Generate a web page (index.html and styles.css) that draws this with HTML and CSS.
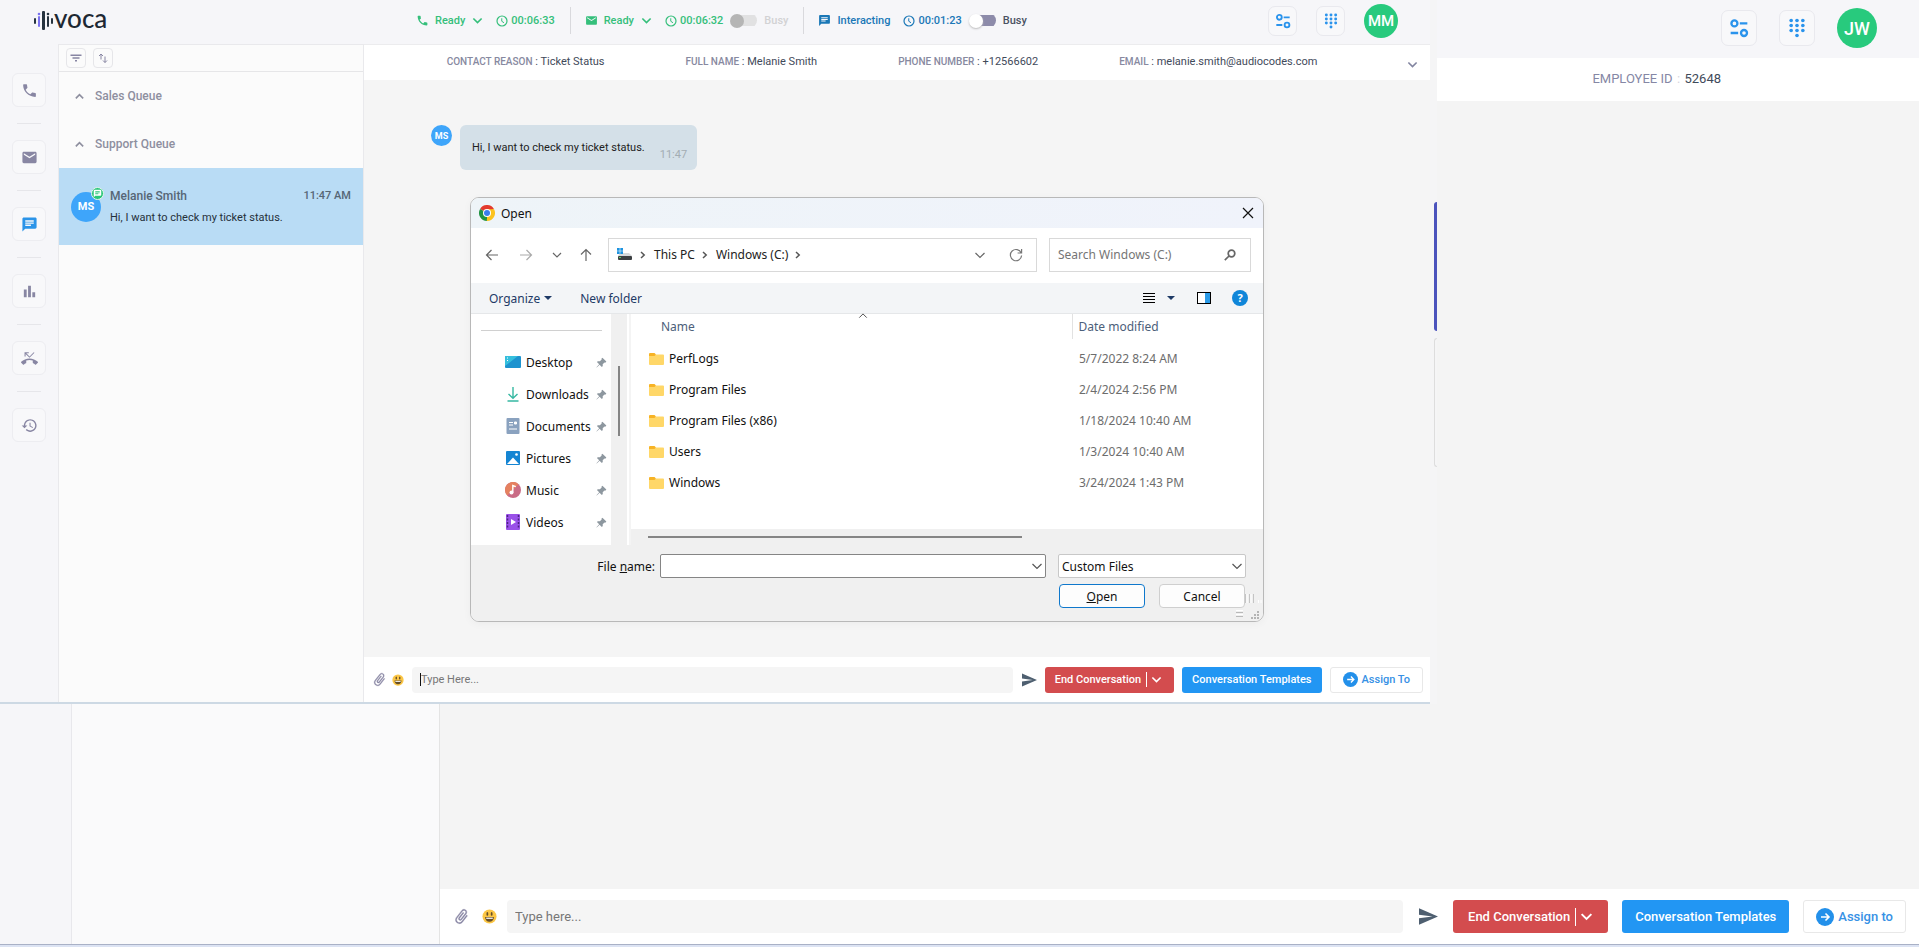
FILE: index.html
```html
<!DOCTYPE html>
<html lang="en">
<head>
<meta charset="UTF-8" />
<meta name="viewport" content="width=device-width, initial-scale=1" />
<title>Voca - Agent Workspace</title>
<link rel="stylesheet" href="styles.css">
</head>
<body>

<!-- icon sprite -->
<svg class="sprite" aria-hidden="true">
  <symbol id="i-phone" viewBox="0 0 24 24"><path d="M6.62 10.79c1.44 2.83 3.76 5.14 6.59 6.59l2.2-2.2c.27-.27.67-.36 1.02-.24 1.12.37 2.33.57 3.57.57.55 0 1 .45 1 1V20c0 .55-.45 1-1 1-9.39 0-17-7.61-17-17 0-.55.45-1 1-1h3.5c.55 0 1 .45 1 1 0 1.25.2 2.45.57 3.57.11.35.03.74-.25 1.02l-2.2 2.2z"/></symbol>
  <symbol id="i-mail" viewBox="0 0 24 24"><path d="M20 4H4c-1.1 0-1.99.9-1.99 2L2 18c0 1.1.9 2 2 2h16c1.1 0 2-.9 2-2V6c0-1.1-.9-2-2-2zm0 4l-8 5-8-5V6l8 5 8-5v2z"/></symbol>
  <symbol id="i-chat" viewBox="0 0 24 24"><path d="M20 2H4c-1.1 0-1.99.9-1.99 2L2 22l4-4h14c1.1 0 2-.9 2-2V4c0-1.1-.9-2-2-2zM6 9h12v2H6V9zm8 5H6v-2h8v2zm4-6H6V6h12v2z"/></symbol>
  <symbol id="i-bars" viewBox="0 0 24 24"><path d="M4 9h4v11H4zM16 13h4v7h-4zM10 4h4v16h-4z"/></symbol>
  <symbol id="i-missed" viewBox="0 0 24 24"><path d="M23.71 16.67C20.66 13.78 16.54 12 12 12 7.46 12 3.34 13.78.29 16.67c-.18.18-.29.43-.29.71 0 .28.11.53.29.71l2.48 2.48c.18.18.43.29.71.29.27 0 .52-.11.7-.28.79-.74 1.69-1.36 2.66-1.85.33-.16.56-.5.56-.9v-3.1c1.45-.48 3-.73 4.6-.73 1.6 0 3.15.25 4.6.72v3.1c0 .39.23.74.56.9.98.49 1.87 1.12 2.67 1.85.18.18.43.28.7.28.28 0 .53-.11.71-.29l2.48-2.48c.18-.18.29-.43.29-.71 0-.28-.12-.52-.3-.7zM6.5 5.5L12 11l7-7-1-1-6 6-4.5-4.5H11V3H5v6h1.5V5.5z"/></symbol>
  <symbol id="i-history" viewBox="0 0 24 24"><path d="M13 3c-4.97 0-9 4.03-9 9H1l3.89 3.89.07.14L9 12H6c0-3.87 3.13-7 7-7s7 3.13 7 7-3.13 7-7 7c-1.93 0-3.68-.79-4.94-2.06l-1.42 1.42C8.27 19.99 10.51 21 13 21c4.97 0 9-4.03 9-9s-4.03-9-9-9zm-1 5v5l4.28 2.54.72-1.21-3.5-2.08V8H12z"/></symbol>
  <symbol id="i-clock" viewBox="0 0 24 24"><circle cx="12" cy="12" r="10" fill="none" stroke="currentColor" stroke-width="2.4"/><path d="M11.5 6.5v6l4.5 3" fill="none" stroke="currentColor" stroke-width="2"/></symbol>
  <symbol id="i-down" viewBox="0 0 12 12"><path d="M1.5 3.8L6 8.2l4.5-4.400" fill="none" stroke="currentColor" stroke-width="1.8"/></symbol>
  <symbol id="i-thin-down" viewBox="0 0 12 12"><path d="M1.5 4L6 8.5 10.5 4" fill="none" stroke="currentColor" stroke-width="1.2"/></symbol>
  <symbol id="i-up" viewBox="0 0 12 12"><path d="M2 8.5L6 4.500l4 4" fill="none" stroke="currentColor" stroke-width="1.8"/></symbol>
  <symbol id="i-crumb" viewBox="0 0 8 8"><path d="M2 1l3.200 3L2 7" fill="none" stroke="currentColor" stroke-width="1.5"/></symbol>
  <symbol id="i-filter" viewBox="0 0 24 24"><path d="M10 19h4v-3h-4v3zM1 5v3h22V5H1zm4 8.500h14v-3H5v3z"/></symbol>
  <symbol id="i-sort" viewBox="0 0 24 24"><path d="M8 15V4M4 8l4-4 4 4M16 9v12M12 17l4 4 4-4" fill="none" stroke="currentColor" stroke-width="2"/></symbol>
  <symbol id="i-settings" viewBox="0 0 24 24"><g fill="none" stroke="currentColor" stroke-width="2.8"><circle cx="6.500" cy="6.500" r="3.600"/><circle cx="18" cy="18" r="3.600"/><path d="M13 6.500h9M2 18h9"/></g></symbol>
  <symbol id="i-dialpad" viewBox="0 0 24 24"><circle cx="5" cy="3" r="2.200"/><circle cx="12" cy="3" r="2.200"/><circle cx="19" cy="3" r="2.200"/><circle cx="5" cy="9" r="2.200"/><circle cx="12" cy="9" r="2.200"/><circle cx="19" cy="9" r="2.200"/><circle cx="5" cy="15" r="2.200"/><circle cx="12" cy="15" r="2.200"/><circle cx="19" cy="15" r="2.200"/><circle cx="12" cy="21" r="2.200"/></symbol>
  <symbol id="i-send" viewBox="2 3 21 18"><path d="M2.010 21L23 12 2.010 3 2 10l15 2-15 2z"/></symbol>
  <symbol id="i-clip" viewBox="0 0 24 24"><path transform="rotate(38 12 12)" d="M16.500 6v11.500c0 2.210-1.790 4-4 4s-4-1.790-4-4V5c0-1.380 1.120-2.500 2.500-2.500s2.500 1.120 2.500 2.500v10.500c0 .55-.45 1-1 1s-1-.45-1-1V6H10v9.500c0 1.380 1.120 2.500 2.500 2.500s2.500-1.120 2.500-2.500V5c0-2.210-1.790-4-4-4S7 2.790 7 5v12.500c0 3.040 2.460 5.500 5.500 5.500s5.500-2.460 5.500-5.500V6h-1.500z" stroke="currentColor" stroke-width=".5"/></symbol>
  <symbol id="i-smile" viewBox="0 0 16 16"><circle cx="8" cy="8" r="7.500" fill="#fbc645"/><ellipse cx="5.700" cy="5.300" rx="1" ry="2" fill="#664e27"/><ellipse cx="10.300" cy="5.300" rx="1" ry="2" fill="#664e27"/><path d="M3.300 8.500h9.400c0 3.200-2 5-4.700 5s-4.700-1.800-4.700-5z" fill="#664e27"/><path d="M4.500 9.200h7v1.300h-7z" fill="#fff"/></symbol>
  <symbol id="i-assign" viewBox="0 0 18 18"><circle cx="9" cy="9" r="9"/><path d="M5 9h8M9.500 5.500L13 9l-3.500 3.500" fill="none" stroke="#fff" stroke-width="1.6"/></symbol>
  <symbol id="i-pin" viewBox="0 0 12 12"><path d="M7 .8L11.300 5l-1.200 1.200-.8-.3-2 2 .1 2-1 1L3.900 8.500.8 11.400l-.3-.3 3-3.200L1 5.500l1-1 2.200.1 2-2L5.900 2z" fill="#8d979f"/></symbol>
  <symbol id="i-folder" viewBox="0 0 15 13"><path d="M0 2Q0 1 1 1h4.500L7 2.500V5H0z" fill="#f7b325"/><path d="M0 4h5.500L7 2.500h7q1 0 1 1V12q0 1-1 1H1q-1 0-1-1z" fill="#ffd768"/></symbol>
</svg>

<div class="app">
  <header class="app-header">
    <button class="icon-btn" aria-label="Settings"><svg class="icon"><use href="#i-settings"/></svg></button>
    <button class="icon-btn" aria-label="Dial pad"><svg class="icon"><use href="#i-dialpad"/></svg></button>
    <span class="user">JW</span>
  </header>
  <div class="app-body">
    <div class="app-rail"></div>
    <div class="app-list"></div>
    <main class="app-main">
      <div class="app-details"><b>EMPLOYEE ID</b><i>:</i><span>52648</span></div>
      <div class="canvas"></div>
      <form class="composer composer-lg">
        <button class="plain clip" type="button" aria-label="Attach file"><svg><use href="#i-clip"/></svg></button>
        <button class="plain smile" type="button" aria-label="Emoji"><svg><use href="#i-smile"/></svg></button>
        <div class="field"><input type="text" placeholder="Type here..." aria-label="Message"></div>
        <button class="plain send" type="button" aria-label="Send"><svg><use href="#i-send"/></svg></button>
        <button class="btn danger" type="button">End Conversation<span class="split"></span><svg><use href="#i-down"/></svg></button>
        <button class="btn primary" type="button">Conversation Templates</button>
        <button class="btn outline" type="button"><svg><use href="#i-assign"/></svg>Assign to</button>
      </form>
    </main>
  </div>
</div>

<!-- agent window -->
<div class="stage">
  <div class="peek peek-active"></div>
  <div class="peek"></div>
  <div class="agent">
    <header class="agent-header">
      <div class="logo">
        <svg viewBox="0 0 20 20" aria-hidden="true">
          <g fill="#26333f"><rect y="7" width="2" height="6" rx="1"/><rect x="8" width="3" height="19" rx="1"/><circle cx="14" cy="3" r="1.300"/><rect x="13" y="5" width="2" height="11" rx="1"/><rect x="17" y="7" width="2" height="6" rx="1"/></g>
          <g fill="#7a72f0"><circle cx="5" cy="3" r="1.300"/><rect x="4" y="5" width="2" height="11" rx="1"/></g>
        </svg>
        <span>voca</span>
      </div>
      <div class="channels">
        <div class="channel ready">
          <svg class="kind"><use href="#i-phone"/></svg><span class="state">Ready</span><svg class="arrow"><use href="#i-down"/></svg>
          <svg class="clock"><use href="#i-clock"/></svg><span>00:06:33</span>
        </div>
        <div class="channel ready">
          <svg class="kind"><use href="#i-mail"/></svg><span class="state">Ready</span><svg class="arrow"><use href="#i-down"/></svg>
          <svg class="clock"><use href="#i-clock"/></svg><span>00:06:32</span>
          <label class="busy off"><input type="checkbox" disabled>Busy</label>
        </div>
        <div class="channel interacting">
          <svg class="kind"><use href="#i-chat"/></svg><span class="state">Interacting</span>
          <svg class="clock"><use href="#i-clock"/></svg><span>00:01:23</span>
          <label class="busy"><input type="checkbox">Busy</label>
        </div>
      </div>
      <div class="tools">
        <button class="icon-btn" aria-label="Settings"><svg class="icon"><use href="#i-settings"/></svg></button>
        <button class="icon-btn" aria-label="Dial pad"><svg class="icon"><use href="#i-dialpad"/></svg></button>
        <span class="user">MM</span>
      </div>
    </header>

    <div class="agent-body">
      <nav class="rail">
        <button aria-label="Calls"><svg><use href="#i-phone"/></svg></button>
        <button aria-label="Emails"><svg><use href="#i-mail"/></svg></button>
        <button class="active" aria-label="Chats"><svg><use href="#i-chat"/></svg></button>
        <button aria-label="Statistics"><svg><use href="#i-bars"/></svg></button>
        <button aria-label="Missed calls"><svg><use href="#i-missed"/></svg></button>
        <button aria-label="History"><svg><use href="#i-history"/></svg></button>
      </nav>

      <aside class="queues">
        <div class="queue-tools">
          <button aria-label="Filter"><svg><use href="#i-filter"/></svg></button>
          <button aria-label="Sort"><svg><use href="#i-sort"/></svg></button>
        </div>
        <button class="queue"><svg><use href="#i-up"/></svg>Sales Queue</button>
        <button class="queue"><svg><use href="#i-up"/></svg>Support Queue</button>
        <article class="chat-item">
          <span class="face">MS<span class="badge"><svg><use href="#i-chat"/></svg></span></span>
          <div class="chat-text">
            <div class="chat-top"><b>Melanie Smith</b><time>11:47 AM</time></div>
            <p>Hi, I want to check my ticket status.</p>
          </div>
        </article>
      </aside>

      <main class="chat">
        <div class="details">
          <div class="detail"><b>CONTACT REASON</b> : Ticket Status</div>
          <div class="detail"><b>FULL NAME</b> : Melanie Smith</div>
          <div class="detail"><b>PHONE NUMBER</b> : +12566602</div>
          <div class="detail"><b>EMAIL</b> : melanie.smith@audiocodes.com</div>
          <button class="plain expand" aria-label="More details"><svg><use href="#i-down"/></svg></button>
        </div>
        <div class="canvas">
          <div class="message">
            <span class="face">MS</span>
            <div class="bubble"><p>Hi, I want to check my ticket status.</p><time>11:47</time></div>
          </div>
        </div>
        <form class="composer">
          <button class="plain clip" type="button" aria-label="Attach file"><svg><use href="#i-clip"/></svg></button>
          <button class="plain smile" type="button" aria-label="Emoji"><svg><use href="#i-smile"/></svg></button>
          <div class="field"><span class="caret"></span><input type="text" placeholder="Type Here..." aria-label="Message"></div>
          <button class="plain send" type="button" aria-label="Send"><svg><use href="#i-send"/></svg></button>
          <button class="btn danger" type="button">End Conversation<span class="split"></span><svg><use href="#i-down"/></svg></button>
          <button class="btn primary" type="button">Conversation Templates</button>
          <button class="btn outline" type="button"><svg><use href="#i-assign"/></svg>Assign To</button>
        </form>
      </main>
    </div>
  </div>
</div>

<!-- file picker -->
<section class="dialog" role="dialog" aria-label="Open">
  <div class="titlebar">
    <svg class="chrome" viewBox="0 0 48 48" aria-hidden="true">
      <path d="M24 24L3.200 12A24 24 0 0 1 44.800 12z" fill="#e33b2e"/>
      <path d="M24 24L44.800 12A24 24 0 0 1 24 48z" fill="#fcc31e"/>
      <path d="M24 24V48A24 24 0 0 1 3.200 12z" fill="#229342"/>
      <path d="M24 13h20.800L34 30 22 48l5-14z" fill="#fcc31e"/>
      <circle cx="24" cy="24" r="12" fill="#fff"/><circle cx="24" cy="24" r="9" fill="#3b7ded"/>
    </svg>
    <span>Open</span>
    <button class="plain" aria-label="Close"><svg viewBox="0 0 12 12"><path d="M1 1l10 10M11 1L1 11" stroke="#111" stroke-width="1.2"/></svg></button>
  </div>

  <div class="navbar">
    <div class="nav-btns">
      <button class="plain" aria-label="Back"><svg viewBox="0 0 14 14"><path d="M13 7H1.500M6.500 2L1.500 7l5 5"/></svg></button>
      <button class="plain dim" aria-label="Forward"><svg viewBox="0 0 14 14"><path d="M1 7h11.500M7.500 2l5 5-5 5"/></svg></button>
      <button class="plain recent" aria-label="Recent"><svg viewBox="0 0 12 12"><path d="M2 4l4 4 4-4"/></svg></button>
      <button class="plain" aria-label="Up"><svg viewBox="0 0 14 14"><path d="M7 13V1.500M2 6.500l5-5 5 5"/></svg></button>
    </div>
    <nav class="address">
      <svg class="drive" viewBox="0 0 16 14" aria-hidden="true"><path d="M3 5h9l3 3H1z" fill="#d5d8da"/><rect x="1" y="8" width="14" height="4" rx="1" fill="#3c3f42"/><path d="M0 0h2.700v2.700H0zM3.300 0H6v2.700H3.300zM0 3.300h2.700V6H0zM3.300 3.300H6V6H3.300z" fill="#1c93e0"/><rect x="2" y="9" width="2" height="1" fill="#5fd35f"/></svg>
      <svg class="crumb"><use href="#i-crumb"/></svg><a href="#">This PC</a>
      <svg class="crumb"><use href="#i-crumb"/></svg><a href="#">Windows (C:)</a>
      <svg class="crumb"><use href="#i-crumb"/></svg>
      <button class="plain history" aria-label="Previous locations"><svg class="s12"><use href="#i-thin-down"/></svg></button>
      <button class="plain" aria-label="Refresh"><svg class="s14" viewBox="0 0 14 14"><path d="M12.200 5A5.600 5.600 0 1 0 12.600 7.500M12.600 1v4H8.600" fill="none" stroke="#777" stroke-width="1.2"/></svg></button>
    </nav>
    <div class="search">
      <input type="text" placeholder="Search Windows (C:)" aria-label="Search Windows (C:)">
      <svg class="s12" viewBox="0 0 12 12"><circle cx="7.500" cy="4.500" r="3.300" fill="none" stroke="#666" stroke-width="1.7"/><path d="M5 7L.8 11.200" stroke="#666" stroke-width="1.7"/></svg>
    </div>
  </div>

  <div class="commands">
    <button class="plain">Organize<span class="tri"></span></button>
    <button class="plain">New folder</button>
    <div class="views">
      <button class="plain" aria-label="Change view"><svg class="s12" viewBox="0 0 12 12"><path d="M0 1.500h12M0 4.500h12M0 7.500h12M0 10.500h12" stroke="#000"/></svg></button>
      <button class="plain more" aria-label="More views"><span class="tri"></span></button>
      <button class="plain preview" aria-label="Preview pane"><svg viewBox="0 0 14 12"><rect x=".5" y=".5" width="13" height="11" fill="#fff" stroke="#000"/><path d="M8 1h5v10H8z" fill="#2b9be8"/></svg></button>
      <button class="help" aria-label="Help">?</button>
    </div>
  </div>

  <div class="browser">
    <div class="places">
      <ul>
        <li><svg class="s16" viewBox="0 0 16 16"><rect y="2" width="16" height="12" rx="1" fill="#1d93cf"/><path d="M0 12V3q0-1 1-1h12z" fill="#35bfdd"/><path d="M2 4h1M2 6.500h1" stroke="#fff"/></svg><span>Desktop</span><svg class="pin"><use href="#i-pin"/></svg></li>
        <li><svg class="s16" viewBox="0 0 16 16"><path d="M8 1v11M3.500 8L8 12.200 12.500 8M2.500 15h11" fill="none" stroke="#36b8a2" stroke-width="1.4"/></svg><span>Downloads</span><svg class="pin"><use href="#i-pin"/></svg></li>
        <li><svg class="s16" viewBox="0 0 16 16"><rect x="1.500" width="13" height="16" rx="1" fill="#8aa2bf"/><path d="M4 4.500h4M4 7h4M4 11h8M9.500 4h2v2h-2z" stroke="#fff" fill="#fff"/></svg><span>Documents</span><svg class="pin"><use href="#i-pin"/></svg></li>
        <li><svg class="s16" viewBox="0 0 16 16"><rect x="1" y="1" width="14" height="14" rx="1" fill="#1585d3"/><path d="M2 14l6-6.500L14 14z" fill="#fff"/><circle cx="11.500" cy="4.500" r="1.300" fill="#fff"/></svg><span>Pictures</span><svg class="pin"><use href="#i-pin"/></svg></li>
        <li><svg class="s16" viewBox="0 0 16 16"><circle cx="8" cy="8" r="8" fill="#ca6c86"/><path d="M0 8a8 8 0 0 1 13.500-5.800L2.300 13.600A8 8 0 0 1 0 8z" fill="#e5815f"/><circle cx="6.500" cy="10.500" r="2" fill="#fff"/><path d="M7.800 10.500V3.500l3 1.200" fill="none" stroke="#fff" stroke-width="1.4"/></svg><span>Music</span><svg class="pin"><use href="#i-pin"/></svg></li>
        <li><svg class="s16" viewBox="0 0 16 16"><rect x="1" width="14" height="16" rx="1" fill="#9a51e8"/><path d="M2.500 1v14M13.500 1v14" stroke="#4d2382" stroke-width="1.5" stroke-dasharray="2 1.5"/><path d="M6 5l5 3-5 3z" fill="#fff"/></svg><span>Videos</span><svg class="pin"><use href="#i-pin"/></svg></li>
      </ul>
      <div class="vscroll"></div>
    </div>
    <div class="files">
      <svg class="sorted"><use href="#i-thin-down"/></svg>
      <table>
        <thead><tr><th>Name</th><th class="date">Date modified</th></tr></thead>
        <tbody>
          <tr><td><svg><use href="#i-folder"/></svg>PerfLogs</td><td>5/7/2022 8:24 AM</td></tr>
          <tr><td><svg><use href="#i-folder"/></svg>Program Files</td><td>2/4/2024 2:56 PM</td></tr>
          <tr><td><svg><use href="#i-folder"/></svg>Program Files (x86)</td><td>1/18/2024 10:40 AM</td></tr>
          <tr><td><svg><use href="#i-folder"/></svg>Users</td><td>1/3/2024 10:40 AM</td></tr>
          <tr><td><svg><use href="#i-folder"/></svg>Windows</td><td>3/24/2024 1:43 PM</td></tr>
        </tbody>
      </table>
      <div class="hscroll"></div>
    </div>
  </div>

  <form class="footer">
    <div class="footer-row">
      <label for="filename">File <u>n</u>ame:</label>
      <div class="combo"><input id="filename" type="text"><svg class="s12"><use href="#i-thin-down"/></svg></div>
      <div class="filetype"><select aria-label="File type"><option>Custom Files</option></select><svg class="s12"><use href="#i-thin-down"/></svg></div>
    </div>
    <div class="footer-row actions">
      <button class="default" type="button"><span><u>O</u>pen</span></button>
      <button type="button">Cancel</button>
    </div>
    <svg class="grips" viewBox="0 0 28 26" aria-hidden="true">
      <path d="M10.500 0v9M14.500 0v9M18.500 0v9" stroke="#c4c4c4"/><path d="M12 0v9M16 0v9M23.500 6v3M26 6v3" stroke="#fff"/>
      <path d="M1 18.500h7M1 22.500h7" stroke="#b9b9b9"/><path d="M1 16.500h7M1 20.500h7" stroke="#fff"/>
      <path d="M22 17h2v2h-2zM19 20h2v2h-2zM22 20h2v2h-2zM16 23h2v2h-2zM19 23h2v2h-2zM22 23h2v2h-2z" fill="#b4b4b4"/>
    </svg>
  </form>
</section>

</body>
</html>
```

FILE: styles.css
```css
* {
  box-sizing: border-box;
}
body {
  margin: 0;
  background: #f4f4f4;
  color: #3f4a5a;
  font-family: Roboto, sans-serif;
  overflow: hidden;
}
button, input, select {
  font: inherit;
  color: inherit;
  margin: 0;
  padding: 0;
}
svg {
  display: block;
  flex: none;
  fill: currentColor;
}
p {
  margin: 0;
}
b {
  font-weight: 500;
}
.sprite {
  position: absolute;
  width: 0;
  height: 0;
}
.plain {
  display: flex;
  align-items: center;
  border: none;
  background: none;
}
.s12 { width: 12px; height: 12px; }
.s14 { width: 14px; height: 14px; }
.s16 { width: 16px; height: 16px; }

/* full size workspace */
.app {
  display: flex;
  flex-direction: column;
  height: 100vh;
  border-bottom: 2px solid #dce3f3;
}
.app-header {
  display: flex;
  justify-content: flex-end;
  align-items: center;
  gap: 22px;
  height: 58px;
  padding: 0 42px 2px 0;
  background: #f6f6f9;
}
.icon-btn {
  display: grid;
  place-items: center;
  width: 36px;
  height: 36px;
  border: 1px solid #e9e9ee;
  border-radius: 7px;
  background: #f8f8fa;
  color: #2a93ec;
}
.icon {
  width: 20px;
  height: 20px;
}
.user {
  display: grid;
  place-items: center;
  width: 40px;
  height: 40px;
  border-radius: 50%;
  background: #28ca7d;
  color: #fff;
  font-size: 18px;
  font-weight: 500;
}
.app-body {
  display: flex;
  flex: 1;
  border-bottom: 1px solid #a9b1c6;
}
.app-rail {
  width: 72px;
  background: #f6f6f9;
  border-right: 1px solid #e8e8ec;
}
.app-list {
  width: 368px;
  background: #fafafb;
  border-right: 1px solid #e4e4e4;
}
.app-main {
  display: flex;
  flex-direction: column;
  flex: 1;
}
.app-details {
  display: flex;
  justify-content: flex-end;
  align-items: center;
  height: 43px;
  padding: 0 198px 2px 0;
  background: #fff;
  font-size: 13px;
}
.app-details b {
  font-weight: 400;
  color: #8587a5;
}
.app-details i {
  width: 12px;
  text-align: center;
  font-style: normal;
  color: #d5d5dd;
}
.canvas {
  flex: 1;
}

/* message composer */
.composer {
  display: flex;
  align-items: center;
  height: 45px;
  padding: 0 7px 0 8px;
  background: #fff;
  font-size: 11px;
}
.clip {
  color: #8886a3;
}
.clip svg {
  width: 15px;
  height: 15px;
}
.smile {
  margin: 0 8px 0 5px;
}
.smile svg {
  width: 12px;
  height: 12px;
}
.field {
  display: flex;
  align-items: center;
  flex: 1;
  height: 26px;
  padding-left: 8px;
  border-radius: 4px;
  background: #f5f5f5;
}
.field input {
  flex: 1;
  border: none;
  background: none;
  outline: none;
}
.field input::placeholder {
  color: #777;
}
.caret {
  width: 1px;
  height: 13px;
  background: #111;
}
.send {
  margin: 0 8px 0 9px;
  color: #4e5f70;
}
.send svg {
  width: 15px;
  height: 14px;
}
.btn {
  display: flex;
  align-items: center;
  justify-content: center;
  height: 26px;
  padding: 0 10px;
  border: none;
  border-radius: 3px;
  color: #fff;
  font-weight: 500;
  white-space: nowrap;
}
.btn + .btn {
  margin-left: 8px;
}
.danger {
  background: #d34c4e;
  padding: 0 12px 0 10px;
}
.danger svg {
  width: 11px;
  height: 11px;
}
.split {
  width: 1px;
  height: 15px;
  margin: 0 4px 0 5px;
  background: #fff;
}
.primary {
  background: #2296f3;
}
.outline {
  gap: 4px;
  padding: 0 12px;
  border: 1px solid #e8e8e8;
  background: #fff;
  color: #3791e5;
}
.outline svg {
  width: 15px;
  height: 15px;
  color: #2390ea;
}

.composer-lg {
  height: 55px;
  padding: 0 13px;
  font-size: 13px;
}
.composer-lg .clip svg {
  width: 17px;
  height: 17px;
}
.composer-lg .smile {
  margin: 0 10px 0 12px;
}
.composer-lg .smile svg {
  width: 15px;
  height: 15px;
}
.composer-lg .field,
.composer-lg .btn {
  height: 33px;
}
.composer-lg .send {
  margin: 0 15px 0 16px;
}
.composer-lg .send svg {
  width: 19px;
  height: 17px;
}
.composer-lg .btn {
  padding: 0 13px;
}
.composer-lg .btn.danger {
  padding: 0 15px;
}
.composer-lg .btn.outline {
  padding: 0 12px;
}
.composer-lg .btn + .btn {
  margin-left: 14px;
}
.composer-lg .danger svg {
  width: 13px;
  height: 13px;
}
.composer-lg .outline svg {
  width: 18px;
  height: 18px;
}
.composer-lg .split {
  height: 18px;
}

/* agent window on top */
.stage {
  position: absolute;
  top: 0;
  left: 0;
  width: calc(100% - 482px);
  height: calc(100vh - 243px);
  padding-right: 7px;
  background: #f5f5f6;
}
.peek {
  position: absolute;
  right: 0;
  top: 338px;
  width: 3px;
  height: 129px;
  border: 1px solid #ddd;
  border-right: none;
  border-radius: 4px 0 0 4px;
}
.peek-active {
  top: 202px;
  border: none;
  background: #4b53bc;
}
.agent {
  display: flex;
  flex-direction: column;
  height: 100%;
  background: #f6f6f9;
  border-bottom: 2px solid #cdd9e4;
}
.agent-header {
  display: flex;
  align-items: center;
  height: 44px;
  padding: 0 32px 3px 34px;
}
.logo {
  display: flex;
  align-items: center;
  width: 368px;
}
.logo svg {
  width: 20px;
  height: 20px;
}
.logo span {
  font-family: Lato, sans-serif;
  font-size: 26px;
  font-weight: 500;
  line-height: 30px;
  height: 36px;
  color: #1d2833;
}
.channels {
  display: flex;
  flex: 1;
  font-size: 11px;
  font-weight: 500;
}
.channel {
  display: flex;
  align-items: center;
  height: 27px;
  padding: 0 15px 0 14px;
}
.channel + .channel {
  border-left: 1px solid #d9d9dd;
}
.ready { color: #35bf7b; }
.interacting { color: #1b78b7; }
.kind {
  width: 13px;
  height: 13px;
}
.state {
  margin-left: 6px;
}
.arrow {
  width: 11px;
  height: 11px;
  margin-left: 7px;
}
.clock {
  width: 12px;
  height: 12px;
  margin: 0 3px 0 13px;
}
.busy {
  display: flex;
  align-items: center;
  gap: 7px;
  margin-left: 7px;
  color: #4a5263;
}
.busy.off {
  color: #d2d2d4;
}
.busy input {
  appearance: none;
  display: flex;
  align-items: center;
  width: 27px;
  height: 15px;
  border-radius: 8px;
  background: linear-gradient(#8d8baa, #8d8baa) right / 22px 11px no-repeat;
}
.busy input::before {
  content: "";
  width: 14px;
  height: 14px;
  border-radius: 50%;
  background: #fff;
  box-shadow: 0 1px 2px #bbb;
}
.busy.off input {
  background-image: linear-gradient(#e1e1e2, #e1e1e2);
}
.busy.off input::before {
  background: #b5b5b5;
  box-shadow: none;
}
.tools {
  display: flex;
  align-items: center;
  gap: 19px;
}
.agent .icon-btn {
  width: 29px;
  height: 30px;
}
.agent .icon {
  width: 16px;
  height: 16px;
}
.agent .user {
  width: 34px;
  height: 34px;
  font-size: 15px;
}
.agent-body {
  display: flex;
  flex: 1;
  min-height: 0;
}

/* icon rail */
.rail {
  display: flex;
  flex-direction: column;
  align-items: center;
  gap: 33px;
  width: 58px;
  padding-top: 29px;
}
.rail button {
  position: relative;
  display: grid;
  place-items: center;
  width: 34px;
  height: 34px;
  border: 1px solid #ededf1;
  border-radius: 6px;
  background: #f8f8fa;
  color: #8886a3;
}
.rail button + button::before {
  content: "";
  position: absolute;
  top: -18px;
  left: 4px;
  width: 24px;
  height: 1px;
  background: #e6e6ea;
}
.rail svg {
  width: 17px;
  height: 17px;
}
.rail .active {
  color: #2b94e8;
}

/* queue list */
.queues {
  width: 306px;
  border: 1px solid #e9e9ec;
  border-bottom: none;
  background: #fbfbfb;
}
.queue-tools {
  display: flex;
  align-items: center;
  gap: 7px;
  height: 27px;
  padding-left: 7px;
  border-bottom: 1px solid #e6e6e8;
}
.queue-tools button {
  display: grid;
  place-items: center;
  width: 20px;
  height: 20px;
  border: 1px solid #e6e6e9;
  border-radius: 4px;
  background: #fbfbfb;
  color: #8886a3;
}
.queue-tools svg {
  width: 12px;
  height: 12px;
}
.queue {
  display: flex;
  align-items: center;
  gap: 10px;
  width: 100%;
  height: 48px;
  padding-left: 15px;
  border: none;
  background: none;
  color: #8e8f9f;
  font-size: 12px;
  font-weight: 500;
}
.queue svg {
  width: 11px;
  height: 16px;
}
.chat-item {
  display: flex;
  align-items: center;
  gap: 9px;
  height: 77px;
  padding: 0 12px;
  background: #b9dcf5;
}
.face {
  position: relative;
  display: grid;
  place-items: center;
  width: 30px;
  height: 30px;
  border-radius: 50%;
  background: #3ea5fa;
  color: #fff;
  font-size: 11px;
  font-weight: 700;
}
.badge {
  position: absolute;
  top: -5px;
  right: -3px;
  display: grid;
  place-items: center;
  width: 13px;
  height: 13px;
  border: 1px solid #e5f5ee;
  border-radius: 50%;
  background: #28c678;
}
.badge svg {
  width: 9px;
  height: 9px;
}
.chat-text {
  flex: 1;
  font-size: 11px;
  line-height: 22px;
  color: #25303a;
}
.chat-top {
  display: flex;
  justify-content: space-between;
  color: #566675;
}
.chat-top b {
  font-size: 12px;
}
.chat-top time {
  font-weight: 500;
}

/* conversation */
.chat {
  display: flex;
  flex-direction: column;
  flex: 1;
  background: #f5f5f5;
}
.details {
  position: relative;
  display: flex;
  align-items: center;
  justify-content: center;
  gap: 81px;
  height: 36px;
  padding: 0 30px 2px 0;
  border-top: 1px solid #ececee;
  background: #fff;
  font-size: 11px;
  white-space: pre;
}
.detail b {
  font-size: 10px;
  color: #8789a0;
}
.expand {
  position: absolute;
  right: 12px;
  top: 14px;
  color: #8285a0;
}
.expand svg {
  width: 11px;
  height: 11px;
}
.message {
  display: flex;
  gap: 8px;
  padding: 45px 67px;
}
.message .face {
  width: 21px;
  height: 21px;
  font-size: 9px;
}
.bubble {
  display: flex;
  gap: 15px;
  height: 45px;
  padding: 16px 10px 0 12px;
  border-radius: 6px;
  background: #d4e0e8;
  color: #222;
  font-size: 11px;
}
.bubble time {
  padding-top: 7px;
  color: #a3adb3;
}

/* file picker */
.dialog {
  position: absolute;
  top: 197px;
  left: 470px;
  width: 794px;
  border: 1px solid #b8b8b8;
  border-radius: 9px;
  background: #fff;
  color: #111;
  font-family: "Noto Sans", sans-serif;
  font-size: 12px;
  overflow: hidden;
  box-shadow: 0 2px 8px #0000000a;
}
.titlebar {
  display: flex;
  align-items: center;
  height: 30px;
  padding: 0 9px 0 8px;
  background: linear-gradient(to right, #eef4f8, #f0f3fb);
}
.titlebar span {
  flex: 1;
  margin-left: 6px;
}
.chrome {
  width: 16px;
  height: 16px;
}
.titlebar button svg {
  width: 12px;
  height: 12px;
}
.navbar {
  display: flex;
  align-items: center;
  height: 55px;
  padding: 0 12px 2px 14px;
}
.nav-btns {
  display: flex;
  width: 123px;
  gap: 20px;
}
.nav-btns svg {
  width: 14px;
  height: 14px;
  fill: none;
  stroke: #666;
  stroke-width: 1.2;
}
.nav-btns .dim svg {
  stroke: #aaa;
}
.nav-btns .recent {
  margin: 0 -4px 0 -2px;
}
.nav-btns .recent svg {
  width: 12px;
}
.address {
  display: flex;
  align-items: center;
  flex: 1;
  height: 34px;
  padding: 0 13px 0 8px;
  border: 1px solid #d9d9d9;
}
.address a {
  color: #222;
  text-decoration: none;
}
.drive {
  width: 16px;
  height: 14px;
}
.crumb {
  width: 8px;
  height: 8px;
  margin: 0 7px 0 6px;
  color: #555;
}
.address .history {
  margin: 0 23px 0 auto;
  color: #666;
}
.search {
  display: flex;
  align-items: center;
  width: 202px;
  height: 34px;
  margin-left: 12px;
  padding: 0 14px 0 8px;
  border: 1px solid #d9d9d9;
}
.search input {
  flex: 1;
  min-width: 0;
  border: none;
  outline: none;
}
.search input::placeholder {
  color: #757575;
}
.commands {
  display: flex;
  align-items: center;
  gap: 28px;
  height: 31px;
  padding: 0 15px 0 18px;
  border-bottom: 1px solid #e5e7e9;
  background: #f3f5f7;
  color: #1e3a66;
}
.tri {
  border: 4px solid transparent;
  border-top: 4px solid #1e3a66;
  border-bottom: none;
  margin-left: 4px;
}
.views {
  display: flex;
  align-items: center;
  margin-left: auto;
}
.views .more {
  margin: 0 22px 0 8px;
}
.preview {
  margin-right: 21px;
}
.preview svg {
  width: 14px;
  height: 12px;
}
.help {
  width: 16px;
  height: 16px;
  border: none;
  border-radius: 50%;
  background: #0f86d9;
  color: #fff;
  font-size: 11px;
  font-weight: 700;
  line-height: 16px;
}
.browser {
  display: flex;
  height: 231px;
}
.places {
  display: flex;
  width: 160px;
  border-right: 2px solid #f4f4f4;
}
.places ul {
  flex: 1;
  margin: 16px 9px 0 10px;
  padding: 15px 0 0 24px;
  list-style: none;
  border-top: 1px solid #d0d0d0;
}
.places li {
  display: flex;
  align-items: center;
  gap: 5px;
  height: 32px;
  margin-right: -5px;
}
.places li span {
  flex: 1;
}
.pin {
  width: 11px;
  height: 11px;
}
.vscroll {
  width: 16px;
  margin-right: 2px;
  padding: 52px 7px 0;
  background: #f0f0f0;
}
.vscroll::before {
  content: "";
  display: block;
  height: 70px;
  background: #858585;
}
.files {
  position: relative;
  display: flex;
  flex-direction: column;
  flex: 1;
}
.sorted {
  position: absolute;
  top: -3px;
  left: 227px;
  width: 10px;
  height: 10px;
  color: #555;
  transform: rotate(180deg);
}
.files table {
  width: 100%;
  border-collapse: collapse;
  table-layout: fixed;
}
.files th {
  height: 25px;
  padding: 0 0 0 30px;
  text-align: left;
  font-weight: 400;
  color: #4c607a;
}
.files .date {
  width: 191px;
  padding-left: 6px;
  border-left: 1px solid #e2e2e2;
}
.files td {
  height: 31px;
  padding: 0 0 0 7px;
  color: #6d6d6d;
}
.files td:first-child {
  display: flex;
  align-items: center;
  gap: 5px;
  padding-left: 18px;
  color: #111;
}
.files td svg {
  width: 15px;
  height: 13px;
}
.files tbody::before {
  content: "";
  display: block;
  height: 4px;
}
.hscroll {
  height: 16px;
  margin-top: auto;
  padding: 7px 241px 0 17px;
  background: #f0f0f0;
}
.hscroll::before {
  content: "";
  display: block;
  height: 2px;
  background: #858585;
}
.footer {
  position: relative;
  padding: 9px 17px 13px;
  background: #f0f0f0;
}
.footer-row {
  display: flex;
  align-items: center;
  justify-content: flex-end;
}
.combo, .filetype {
  display: flex;
  align-items: center;
  height: 24px;
  margin-left: 5px;
  padding-right: 2px;
  border: 1px solid #858585;
  border-radius: 2px;
  background: #fff;
  color: #555;
}
.combo {
  width: 386px;
}
.combo input {
  flex: 1;
  border: none;
  background: none;
  outline: none;
}
.filetype {
  width: 188px;
  margin-left: 12px;
  border-color: #c8c8c8;
}
.filetype select {
  appearance: none;
  flex: 1;
  padding-left: 3px;
  border: none;
  background: none;
  color: #111;
  outline: none;
}
.actions {
  gap: 14px;
  margin-top: 6px;
  padding-right: 1px;
}
.actions button {
  width: 86px;
  height: 24px;
  border: 1px solid #cfcfcf;
  border-radius: 4px;
  background: #fdfdfd;
}
.actions .default {
  border-color: #0f78cc;
}
.grips {
  position: absolute;
  right: 0;
  bottom: 1px;
  width: 28px;
  height: 26px;
}
```
